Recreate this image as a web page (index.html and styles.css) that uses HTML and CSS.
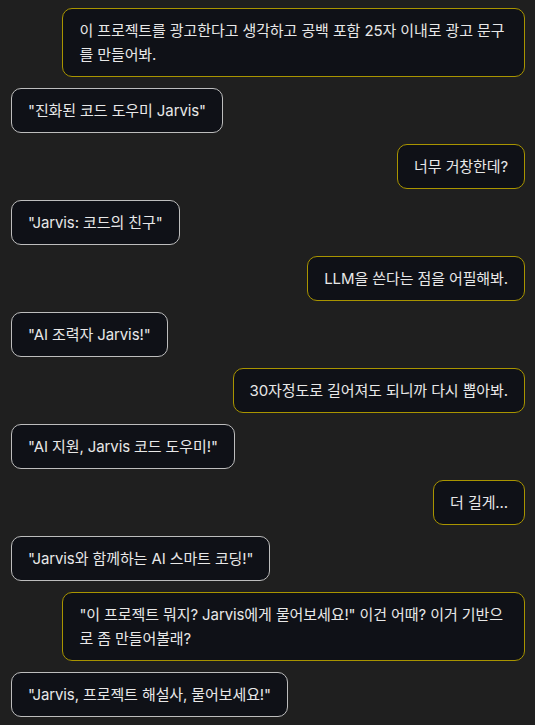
FILE: index.html
```html
<!DOCTYPE html>
<html lang="ko">
<head>
<meta charset="utf-8">
<link rel="stylesheet" href="styles.css">
</head>
<body>
<div class="chat">
  <div class="msg user">이 프로젝트를 광고한다고 생각하고 공백 포함 25자 이내로 광고 문구를 만들어봐.</div>
  <div class="msg bot">"진화된 코드 도우미 Jarvis"</div>
  <div class="msg user">너무 거창한데?</div>
  <div class="msg bot">"Jarvis: 코드의 친구"</div>
  <div class="msg user">LLM을 쓴다는 점을 어필해봐.</div>
  <div class="msg bot">"AI 조력자 Jarvis!"</div>
  <div class="msg user">30자정도로 길어져도 되니까 다시 뽑아봐.</div>
  <div class="msg bot">"AI 지원, Jarvis 코드 도우미!"</div>
  <div class="msg user">더 길게...</div>
  <div class="msg bot">"Jarvis와 함께하는 AI 스마트 코딩!"</div>
  <div class="msg user">"이 프로젝트 뭐지? Jarvis에게 물어보세요!" 이건 어때? 이거 기반으로 좀 만들어볼래?</div>
  <div class="msg bot">"Jarvis, 프로젝트 해설사, 물어보세요!"</div>
</div>
</body>
</html>
```

FILE: styles.css
```css
html, body {
  margin: 0;
  padding: 0;
  background: #1f1f1f;
}
body {
  font-family: Inter, "Noto Sans CJK KR", sans-serif;
  font-size: 15px;
  letter-spacing: -0.1px;
  color: #e8e8e8;
}
.chat {
  display: flex;
  flex-direction: column;
  gap: 11px;
  padding: 8px 10px 8px 11px;
}
.msg {
  max-width: 90%;
  box-sizing: border-box;
  padding: 9.5px 16px;
  line-height: 24px;
  background: #0f1117;
  border: 1px solid #bdbdbd;
  border-radius: 10px;
}
.user {
  align-self: flex-end;
  border-color: #a89400;
}
.bot {
  align-self: flex-start;
}
```
